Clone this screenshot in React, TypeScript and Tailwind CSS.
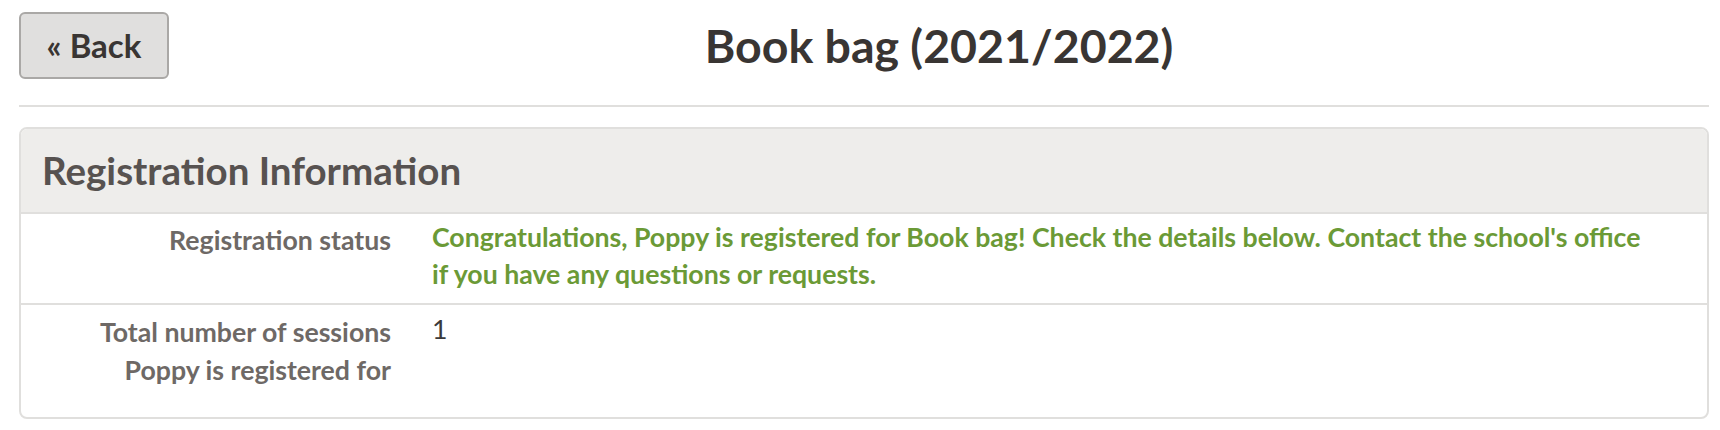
export default function App() {
  return (
    <div className="min-h-screen bg-white pl-[19px] pr-[11px] font-['Lato',sans-serif]">
      {/* header */}
      <div className="flex items-center pt-[12px] h-[105px] pb-[26px]">
        <button className="w-[150px] h-[67px] shrink-0 rounded-[6px] border-2 border-[#aaa8a6] bg-[#e0dfde] text-[33px] font-bold text-[#393533]">
          « Back
        </button>
        <div className="flex-1 flex justify-center">
          <h1 className="text-[46.5px] font-bold text-[#393533] leading-none">Book bag (2021/2022)</h1>
        </div>
      </div>
      <div className="h-[2px] bg-[#e0dfdd]" />

      {/* card */}
      <div className="mt-[20px] rounded-[8px] border-2 border-[#e0dfdd] overflow-hidden">
        <div className="h-[85px] flex items-center pl-[21px] bg-[#eeedeb] border-b-2 border-[#e0dfdd]">
          <h2 className="text-[38.5px] font-bold text-[#575250]">Registration Information</h2>
        </div>

        <div className="flex h-[91px] border-b-2 border-[#e0dfdd] text-[26.7px]">
          <div className="w-[370px] shrink-0 pt-[7px] text-right font-bold text-[#6e6966] leading-[38px]">
            Registration status
          </div>
          <div className="pl-[41px] pt-[5px] font-bold text-[#6b9a36] leading-[37px]">
            Congratulations, Poppy is registered for Book bag! Check the details below. Contact the school's office
            <br />
            if you have any questions or requests.
          </div>
        </div>

        <div className="flex h-[112px] text-[26.7px]">
          <div className="w-[370px] shrink-0 pt-[8px] text-right font-bold text-[#6e6966] leading-[38px]">
            Total number of sessions
            <br />
            Poppy is registered for
          </div>
          <div className="pl-[41px] pt-[6px] text-[#3a3a3a] leading-[37px]">1</div>
        </div>
      </div>
    </div>
  );
}
